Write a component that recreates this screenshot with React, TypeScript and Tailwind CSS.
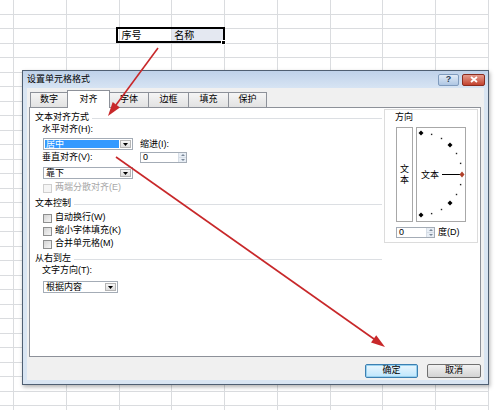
import React from 'react'

const GRID = 'border-[#dadcdf]'

function Sheet() {
  const rows = Array.from({ length: 29 })
  const cols = Array.from({ length: 9 })
  return (
    <div className="flex flex-col">
      {rows.map((_, r) => (
        <div key={r} className="flex h-[14.5px] shrink-0">
          <div className={`w-[14px] shrink-0 border-r border-b ${GRID}`} />
          {cols.map((_, c) => {
            let text = ''
            let bg = ''
            if (r === 2 && c === 2) text = '序号'
            if (r === 2 && c === 3) {
              text = '名称'
              bg = 'bg-[#e4e8f1]'
            }
            return (
              <div
                key={c}
                className={`w-[52.75px] shrink-0 border-r border-b ${GRID} ${bg} pl-[2px] text-[10px] leading-[14px] text-black`}
              >
                {text}
              </div>
            )
          })}
        </div>
      ))}
    </div>
  )
}

function Combo({ value, width, selected }: { value: string; width: string; selected?: boolean }) {
  return (
    <div className={`flex h-[12px] border border-[#a4acb6] bg-white ${width}`}>
      <div className="flex-1 flex items-center p-[1px]">
        <span
          className={`h-full w-full flex items-center pl-[1px] leading-none ${
            selected ? 'bg-[#3399ff] text-white' : 'text-black'
          }`}
        >
          {value}
        </span>
      </div>
      <div className="w-[11px] my-[1px] mr-[1px] border border-[#b5b5b5] bg-gradient-to-b from-[#f6f6f6] to-[#dedede] flex items-center justify-center">
        <svg width="5" height="3" viewBox="0 0 5 3">
          <path d="M0 0h5L2.5 3z" fill="#000" />
        </svg>
      </div>
    </div>
  )
}

function Spin({ width }: { width: string }) {
  return (
    <div className={`flex h-[11px] border border-[#a4acb6] bg-white ${width}`}>
      <span className="flex-1 pl-[2px] leading-[9px] text-black">0</span>
      <div className="w-[8px] flex flex-col border-l border-[#d6dde6]">
        <div className="flex-1 bg-[#e8eef5] flex items-center justify-center border-b border-[#d6dde6]">
          <svg width="4" height="2" viewBox="0 0 4 2">
            <path d="M0 2h4L2 0z" fill="#7a8899" />
          </svg>
        </div>
        <div className="flex-1 bg-[#e8eef5] flex items-center justify-center">
          <svg width="4" height="2" viewBox="0 0 4 2">
            <path d="M0 0h4L2 2z" fill="#7a8899" />
          </svg>
        </div>
      </div>
    </div>
  )
}

function Check({ label, disabled }: { label: string; disabled?: boolean }) {
  return (
    <div className="flex items-center h-[12px]">
      <span
        className={`w-[9px] h-[9px] border ${
          disabled
            ? 'border-[#cfcfcf] bg-[#f5f5f5]'
            : 'border-[#8e8f8f] bg-gradient-to-br from-[#d4d4d4] to-[#f6f6f6]'
        }`}
      />
      <span className={`ml-[3px] ${disabled ? 'text-[#a8a8a8]' : 'text-black'}`}>{label}</span>
    </div>
  )
}

function Heading({ text }: { text: string }) {
  return (
    <div className="flex items-center h-[12px]">
      <span className="text-black">{text}</span>
      <span className="flex-1 ml-[3px] h-px bg-[#dcdfe3]" />
    </div>
  )
}

function Dial() {
  const cx = 4
  const cy = 46
  const r = 41
  const dots = Array.from({ length: 13 }).map((_, i) => {
    const deg = 90 - i * 15
    const a = (deg * Math.PI) / 180
    return { deg, x: cx + r * Math.cos(a), y: cy - r * Math.sin(a) }
  })
  return (
    <svg width="48" height="93" viewBox="0 0 48 93">
      {dots.map((d) => {
        if (d.deg === 0) return null
        if (d.deg % 45 === 0) {
          return (
            <path
              key={d.deg}
              d={`M${d.x} ${d.y - 2.5}L${d.x + 2.5} ${d.y}L${d.x} ${d.y + 2.5}L${d.x - 2.5} ${d.y}z`}
              fill="#000"
            />
          )
        }
        return <rect key={d.deg} x={d.x - 0.7} y={d.y - 0.7} width="1.4" height="1.4" fill="#222" />
      })}
      <text x="4" y="49.5" fontSize="9" fill="#000" fontFamily="'Noto Sans CJK SC', sans-serif">
        文本
      </text>
      <line x1="25" y1="46.5" x2="43" y2="46.5" stroke="#000" strokeWidth="1" />
      <path d="M45 43.5L47.5 46.5L45 49.5L42.5 46.5z" fill="#b0402a" />
    </svg>
  )
}

const tabs = [
  { label: '数字', w: 'w-[38px]' },
  { label: '对齐', w: 'w-[43px]', active: true },
  { label: '字体', w: 'w-[40px]' },
  { label: '边框', w: 'w-[41px]' },
  { label: '填充', w: 'w-[41px]' },
  { label: '保护', w: 'w-[39px]' },
]

function Dialog() {
  return (
    <div className="absolute left-[22px] top-[70px] w-[467px] h-[315px] border border-[#4f5f72] bg-[#d9e5f2] flex flex-col shadow-[1px_2px_4px_rgba(0,0,0,0.3)] text-[9px]">
      <div className="h-[17px] shrink-0 flex items-center pl-[4px] pr-[3px] bg-gradient-to-b from-[#bfd2ea] to-[#d7e4f3]">
        <span className="text-black leading-none">设置单元格格式</span>
        <div className="ml-auto flex gap-[3px]">
          <div className="w-[21px] h-[12px] rounded-[2px] border border-[#7f9bbd] bg-gradient-to-b from-[#e1ebf7] to-[#aec6e3] flex items-center justify-center text-[9px] font-bold leading-none text-[#2a3d55]">
            ?
          </div>
          <div className="w-[23px] h-[12px] rounded-[2px] border border-[#8a2c1f] bg-gradient-to-b from-[#e49a8c] to-[#c2412e] flex items-center justify-center">
            <svg width="8" height="7" viewBox="0 0 8 7">
              <path d="M1 1L7 6M7 1L1 6" stroke="#fff" strokeWidth="1.8" />
            </svg>
          </div>
        </div>
      </div>

      <div className="flex-1 mx-[4px] mb-[4px] bg-[#f0f0f0] flex flex-col pl-[2px] pr-[3px] pt-[4px]">
        <div className="flex items-end h-[15px] ml-[1px]">
          {tabs.map((t, i) => (
            <div
              key={t.label}
              className={`${t.w} ${i > 0 ? '-ml-px' : ''} border border-b-0 border-[#8d9199] flex items-center justify-center text-black ${
                t.active
                  ? 'h-[18px] relative top-[1px] z-10 bg-white'
                  : 'h-[15px] bg-gradient-to-b from-[#f5f5f5] to-[#e2e2e2]'
              }`}
            >
              {t.label}
            </div>
          ))}
        </div>

        <div className="h-[250px] shrink-0 border border-[#8d9199] bg-white flex pl-[5px] pr-[2px] gap-[2px]">
          <div className="flex-1 flex flex-col">
            <div className="mt-[4px]">
              <Heading text="文本对齐方式" />
            </div>
            <div className="flex ml-[7px]">
              <div className="flex flex-col">
                <div className="h-[12px] flex items-center text-black">水平对齐(H):</div>
                <div className="mt-[2px] ml-[1px]">
                  <Combo value="居中" width="w-[90px]" selected />
                </div>
                <div className="mt-[2px] h-[12px] flex items-center text-black">垂直对齐(V):</div>
                <div className="mt-[3px] ml-[1px]">
                  <Combo value="靠下" width="w-[90px]" />
                </div>
              </div>
              <div className="flex flex-col ml-[7px] pt-[15px]">
                <div className="h-[12px] flex items-center text-black">缩进(I):</div>
                <div className="mt-[1px]">
                  <Spin width="w-[47px]" />
                </div>
              </div>
            </div>
            <div className="mt-[3px] ml-[8px]">
              <Check label="两端分散对齐(E)" disabled />
            </div>
            <div className="mt-[4px]">
              <Heading text="文本控制" />
            </div>
            <div className="ml-[8px] mt-[2px] flex flex-col gap-[1px]">
              <Check label="自动换行(W)" />
              <Check label="缩小字体填充(K)" />
              <Check label="合并单元格(M)" />
            </div>
            <div className="mt-[3px]">
              <Heading text="从右到左" />
            </div>
            <div className="ml-[7px] h-[12px] flex items-center text-black">文字方向(T):</div>
            <div className="ml-[8px] mt-[4px]">
              <Combo value="根据内容" width="w-[75px]" />
            </div>
          </div>

          <div className="w-[94px] h-[134px] mt-[1px] border border-[#dcdcdc] flex flex-col pl-[11px] pt-[2px]">
            <div className="h-[12px] -ml-px flex items-center text-black">方向</div>
            <div className="mt-[3px] flex gap-[3px]">
              <div className="w-[17px] h-[95px] border border-[#a8a8a8] flex flex-col items-center justify-center leading-[11px] text-black">
                <span>文</span>
                <span>本</span>
              </div>
              <div className="w-[50px] h-[95px] border border-[#a8a8a8]">
                <Dial />
              </div>
            </div>
            <div className="mt-[5px] flex items-center">
              <Spin width="w-[39px]" />
              <span className="ml-[3px] text-black leading-none">度(D)</span>
            </div>
          </div>
        </div>

        <div className="mt-[7px] flex justify-end gap-[9px]">
          <div className="w-[53px] h-[14px] rounded-[2px] border border-[#3c7fb1] bg-gradient-to-b from-[#eaf6fd] to-[#bee6fd] flex items-center justify-center text-black shadow-[inset_0_0_0_1px_#98d1ef]">
            确定
          </div>
          <div className="w-[54px] h-[14px] rounded-[2px] border border-[#707070] bg-gradient-to-b from-[#f2f2f2] to-[#d3d3d3] flex items-center justify-center text-black">
            取消
          </div>
        </div>
      </div>
    </div>
  )
}

function Arrows() {
  return (
    <svg className="absolute left-0 top-0 pointer-events-none" width="500" height="410" viewBox="0 0 500 410">
      <line x1="158" y1="48" x2="116" y2="105" stroke="#c8282a" strokeWidth="1.6" />
      <path d="M108 116L119.9 107.4L112.7 102z" fill="#c8282a" />
      <line x1="116" y1="157" x2="374" y2="339" stroke="#c8282a" strokeWidth="1.6" />
      <path d="M385 347L371 342.6L376.2 335.2z" fill="#c8282a" />
    </svg>
  )
}

export default function App() {
  return (
    <div className="relative w-[500px] h-[410px] overflow-hidden bg-white font-['Liberation_Sans','Noto_Sans_CJK_SC',sans-serif]">
      <Sheet />
      <div className="absolute left-[116px] top-[27px] w-[109px] h-[16px] border-2 border-black" />
      <div className="absolute left-[221px] top-[40px] w-[5px] h-[5px] bg-black border border-white" />
      <Dialog />
      <Arrows />
    </div>
  )
}
